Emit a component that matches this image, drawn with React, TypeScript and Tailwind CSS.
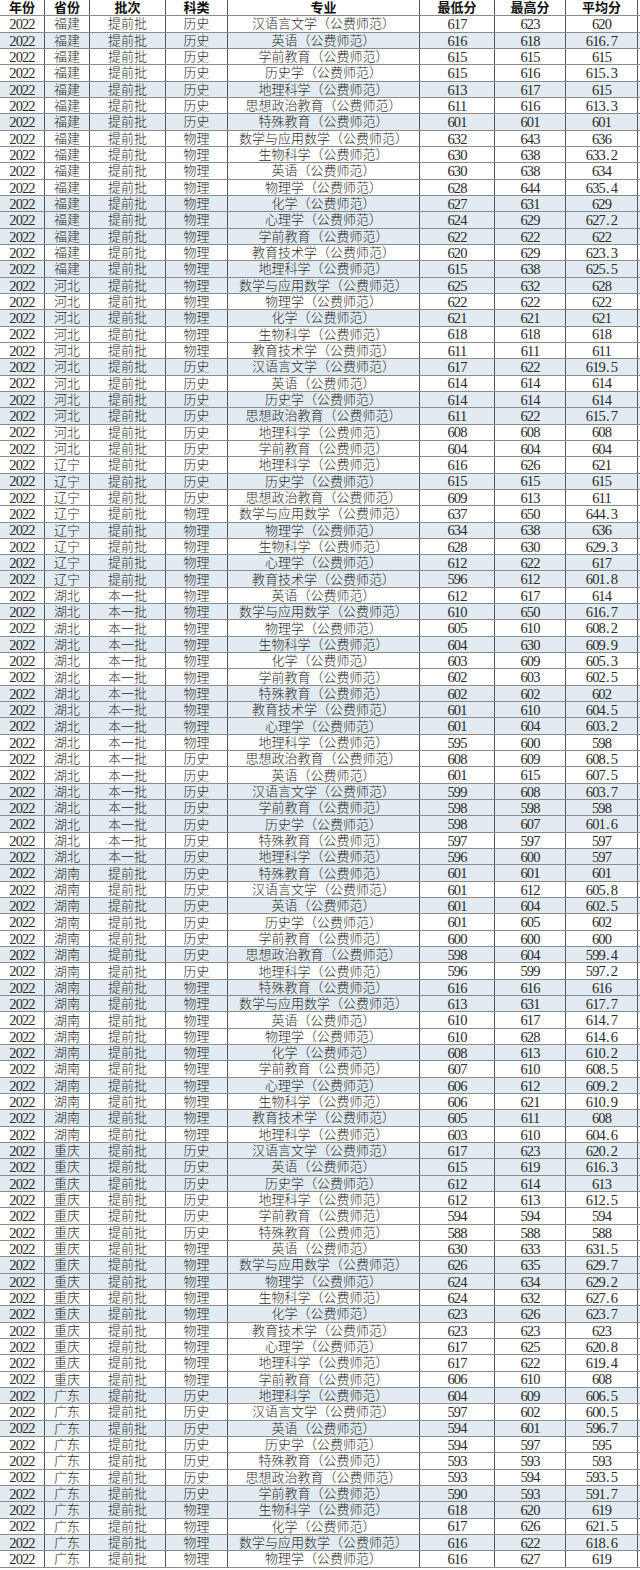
import React from "react";

const RAW = `福建|历史|汉语言文学|617|623|620
福建|历史|英语|616|618|616.7
福建|历史|学前教育|615|615|615
福建|历史|历史学|615|616|615.3
福建|历史|地理科学|613|617|615
福建|历史|思想政治教育|611|616|613.3
福建|历史|特殊教育|601|601|601
福建|物理|数学与应用数学|632|643|636
福建|物理|生物科学|630|638|633.2
福建|物理|英语|630|638|634
福建|物理|物理学|628|644|635.4
福建|物理|化学|627|631|629
福建|物理|心理学|624|629|627.2
福建|物理|学前教育|622|622|622
福建|物理|教育技术学|620|629|623.3
福建|物理|地理科学|615|638|625.5
河北|物理|数学与应用数学|625|632|628
河北|物理|物理学|622|622|622
河北|物理|化学|621|621|621
河北|物理|生物科学|618|618|618
河北|物理|教育技术学|611|611|611
河北|历史|汉语言文学|617|622|619.5
河北|历史|英语|614|614|614
河北|历史|历史学|614|614|614
河北|历史|思想政治教育|611|622|615.7
河北|历史|地理科学|608|608|608
河北|历史|学前教育|604|604|604
辽宁|历史|地理科学|616|626|621
辽宁|历史|历史学|615|615|615
辽宁|历史|思想政治教育|609|613|611
辽宁|物理|数学与应用数学|637|650|644.3
辽宁|物理|物理学|634|638|636
辽宁|物理|生物科学|628|630|629.3
辽宁|物理|心理学|612|622|617
辽宁|物理|教育技术学|596|612|601.8
湖北|物理|英语|612|617|614
湖北|物理|数学与应用数学|610|650|616.7
湖北|物理|物理学|605|610|608.2
湖北|物理|生物科学|604|630|609.9
湖北|物理|化学|603|609|605.3
湖北|物理|学前教育|602|603|602.5
湖北|物理|特殊教育|602|602|602
湖北|物理|教育技术学|601|610|604.5
湖北|物理|心理学|601|604|603.2
湖北|物理|地理科学|595|600|598
湖北|历史|思想政治教育|608|609|608.5
湖北|历史|英语|601|615|607.5
湖北|历史|汉语言文学|599|608|603.7
湖北|历史|学前教育|598|598|598
湖北|历史|历史学|598|607|601.6
湖北|历史|特殊教育|597|597|597
湖北|历史|地理科学|596|600|597
湖南|历史|特殊教育|601|601|601
湖南|历史|汉语言文学|601|612|605.8
湖南|历史|英语|601|604|602.5
湖南|历史|历史学|601|605|602
湖南|历史|学前教育|600|600|600
湖南|历史|思想政治教育|598|604|599.4
湖南|历史|地理科学|596|599|597.2
湖南|物理|特殊教育|616|616|616
湖南|物理|数学与应用数学|613|631|617.7
湖南|物理|英语|610|617|614.7
湖南|物理|物理学|610|628|614.6
湖南|物理|化学|608|613|610.2
湖南|物理|学前教育|607|610|608.5
湖南|物理|心理学|606|612|609.2
湖南|物理|生物科学|606|621|610.9
湖南|物理|教育技术学|605|611|608
湖南|物理|地理科学|603|610|604.6
重庆|历史|汉语言文学|617|623|620.2
重庆|历史|英语|615|619|616.3
重庆|历史|历史学|612|614|613
重庆|历史|地理科学|612|613|612.5
重庆|历史|学前教育|594|594|594
重庆|历史|特殊教育|588|588|588
重庆|物理|英语|630|633|631.5
重庆|物理|数学与应用数学|626|635|629.7
重庆|物理|物理学|624|634|629.2
重庆|物理|生物科学|624|632|627.6
重庆|物理|化学|623|626|623.7
重庆|物理|教育技术学|623|623|623
重庆|物理|心理学|617|625|620.8
重庆|物理|地理科学|617|622|619.4
重庆|物理|学前教育|606|610|608
广东|历史|地理科学|604|609|606.5
广东|历史|汉语言文学|597|602|600.5
广东|历史|英语|594|601|596.7
广东|历史|历史学|594|597|595
广东|历史|特殊教育|593|593|593
广东|历史|思想政治教育|593|594|593.5
广东|历史|学前教育|590|593|591.7
广东|物理|生物科学|618|620|619
广东|物理|化学|617|626|621.5
广东|物理|数学与应用数学|616|622|618.6
广东|物理|物理学|616|627|619`;

const TINTED = new Set([
  2, 5, 7, 12, 13, 14, 16, 17, 19, 22, 24, 25, 29, 32, 34, 35, 37, 39, 42, 43,
  44, 48, 49, 50, 52, 53, 55, 58, 60, 61, 64, 66, 68, 70, 71, 72, 77, 78, 80,
  85, 87, 91, 92, 94,
]);

const rows = RAW.split("\n").map((line) => {
  const [prov, subj, major, min, max, avg] = line.split("|");
  return {
    prov,
    batch: prov === "湖北" ? "本一批" : "提前批",
    subj,
    major: major + "（公费师范）",
    min,
    max,
    avg,
  };
});

const HEAD = ["年份", "省份", "批次", "科类", "专业", "最低分", "最高分", "平均分"];
const NUM_COLS = new Set([0, 5, 6, 7]);

function Num({ value }: { value: string }) {
  const parts = value.split(".");
  if (parts.length === 1) return <span className="tracking-[-0.9px]">{value}</span>;
  return (
    <span className="tracking-[-0.9px]">
      {parts[0]}
      <span className="inline-block w-[6px] text-center tracking-normal">.</span>
      {parts[1]}
    </span>
  );
}

function Row({ cells, tinted, bold }: { cells: string[]; tinted: boolean; bold?: boolean }) {
  return (
    <div
      className={
        "grid grid-cols-[45px_45px_76px_62px_192px_75px_71px_72px] h-[16.34px] border-b border-[#8c8c8c] " +
        (tinted ? "bg-[#e1ebf1]" : "bg-white")
      }
    >
      {cells.map((c, i) => {
        const isNum = !bold && NUM_COLS.has(i);
        return (
          <div
            key={i}
            className={
              "flex items-center justify-center border-r border-[#555555] whitespace-nowrap overflow-hidden leading-none " +
              (bold
                ? "font-bold text-[#111111] text-[13px]"
                : isNum
                  ? "text-[#2a2a2a] text-[14.5px] pt-px"
                  : "text-[#2a2a2a] text-[13px] font-light")
            }
          >
            {isNum ? <Num value={c} /> : c}
          </div>
        );
      })}
    </div>
  );
}

export default function App() {
  return (
    <div
      className="w-[640px] bg-white"
      style={{ fontFamily: "'Liberation Serif', 'Noto Sans CJK SC', serif" }}
    >
      <Row cells={HEAD} tinted={false} bold />
      {rows.map((r, i) => (
        <Row
          key={i}
          tinted={TINTED.has(i + 1)}
          cells={["2022", r.prov, r.batch, r.subj, r.major, r.min, r.max, r.avg]}
        />
      ))}
    </div>
  );
}
